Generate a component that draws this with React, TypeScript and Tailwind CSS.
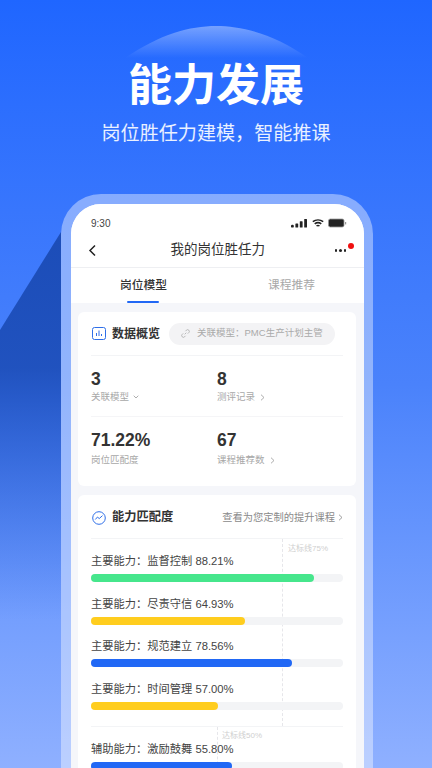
const bars = [
  { label: "主要能力：监督控制 88.21%", width: "88.5%", color: "bg-[#46e68c]" },
  { label: "主要能力：尽责守信 64.93%", width: "61.1%", color: "bg-[#ffcd1e]" },
  { label: "主要能力：规范建立 78.56%", width: "79.8%", color: "bg-[#2168f5]" },
  { label: "主要能力：时间管理 57.00%", width: "50.3%", color: "bg-[#ffcd1e]" },
];

const Stat = ({ value, label, arrow, low }: { value: string; label: string; arrow: "down" | "right" | ""; low?: boolean }) => (
  <div className="flex flex-col">
    <div className="text-[17.5px] leading-[20px] font-bold text-[#333]">{value}</div>
    <div className={low ? "mt-[3px] flex items-center text-[9.5px] leading-[14px] text-[#a8a8a8]" : "mt-[1px] flex items-center text-[9.5px] leading-[14px] text-[#a8a8a8]"}>
      {label}
      {arrow === "right" && (
        <svg width="5" height="7" viewBox="0 0 5 7" className="ml-[5px]" fill="none" stroke="#999" strokeWidth="0.8">
          <path d="M1 .7 4 3.5 1 6.3" />
        </svg>
      )}
      {arrow === "down" && (
        <svg width="6" height="4" viewBox="0 0 6 4" className="ml-[4px]" fill="none" stroke="#999" strokeWidth="0.8">
          <path d="M.7 .7 3 3 5.3 .7" />
        </svg>
      )}
    </div>
  </div>
);

const Bar = ({ label, width, color }: { label: string; width: string; color: string }) => (
  <div className="h-[42.6px]">
    <div className="text-[11.25px] leading-[16px] text-[#444]">{label}</div>
    <div className="mt-[5px] h-[8px] rounded-full bg-[#f3f4f6]">
      <div className={`h-full rounded-full ${color}`} style={{ width }} />
    </div>
  </div>
);

export default function App() {
  return (
    <div className="relative h-[768px] w-[432px] overflow-hidden bg-gradient-to-b from-[#1f66ff] via-[#4a82fb] to-[#8fb0ff] font-['Liberation_Sans','Noto_Sans_CJK_SC',sans-serif]">
      {/* background shapes */}
      <svg className="absolute left-0 top-0" width="432" height="768" viewBox="0 0 432 768">
        <defs>
          <linearGradient id="dome" x1="0" y1="0" x2="0" y2="1">
            <stop offset="0" stopColor="#fff" stopOpacity="0.38" />
            <stop offset="1" stopColor="#fff" stopOpacity="0" />
          </linearGradient>
          <linearGradient id="slope" x1="0" y1="0" x2="0" y2="1">
            <stop offset="0" stopColor="#1c4db8" stopOpacity="1" />
            <stop offset="0.35" stopColor="#1c4db8" stopOpacity="0.9" />
            <stop offset="1" stopColor="#2a62e0" stopOpacity="0" />
          </linearGradient>
        </defs>
        <path d="M125 58C160 34 190 26 216 26c26 0 58 8 92 32Z" fill="url(#dome)" />
        <path d="M61 232 0 330V620H61Z" fill="url(#slope)" />
      </svg>

      <div className="relative flex flex-col items-center">
        <h1 className="mt-[57px] text-[44px] leading-[58px] font-bold text-white">能力发展</h1>
        <p className="mt-[5px] text-[19.1px] leading-[28px] text-white/90">岗位胜任力建模，智能推课</p>

        {/* phone */}
        <div className="mt-[46px] ml-[2px] h-[640px] w-[312px] rounded-t-[40px] bg-white/40 pl-[10px] pr-[9px] pt-[10px]">
          <div className="h-full overflow-hidden rounded-t-[30px] bg-[#f5f6fa]">
            <div className="bg-white">
              <div className="flex h-[34px] items-center justify-between pl-[20px] pr-[17px] pt-[4px]">
                <span className="text-[10px] text-[#444]">9:30</span>
                <svg width="56" height="10" viewBox="0 0 56 10" fill="#222">
                  <rect x="0" y="6.8" width="2.8" height="2.8" rx="1.2" />
                  <rect x="4.4" y="5.4" width="2.8" height="4.2" rx=".6" />
                  <rect x="8.8" y="3.2" width="2.8" height="6.4" rx=".6" />
                  <rect x="13.2" y="1" width="2.8" height="8.6" rx=".6" />
                  <path d="M21.8 3.7a8.4 8.4 0 0 1 10.4 0M23.7 5.9a5.4 5.4 0 0 1 6.6 0M25.5 8a2.4 2.4 0 0 1 3 0" fill="none" stroke="#222" strokeWidth="1.5" />
                  <rect x="37.5" y="1" width="15.5" height="8" rx="1.8" fill="#222" stroke="#999" strokeWidth="0.8" />
                  <rect x="54" y="4" width="1.2" height="2.4" fill="#999" />
                </svg>
              </div>
              <div className="flex h-[29px] items-center justify-between pb-[4px] pl-[17px] pr-[18px]">
                <svg width="9" height="13" viewBox="0 0 9 13" fill="none" stroke="#222" strokeWidth="1.5">
                  <path d="M7 1.5 2 6.5l5 5" />
                </svg>
                <span className="ml-[4px] text-[13.5px] text-[#333]">我的岗位胜任力</span>
                <span className="relative flex gap-[2px]">
                  <i className="h-[2.5px] w-[2.5px] rounded-full bg-[#222]" />
                  <i className="h-[2.5px] w-[2.5px] rounded-full bg-[#222]" />
                  <i className="h-[2.5px] w-[2.5px] rounded-full bg-[#222]" />
                  <i className="absolute -right-[8px] -top-[6px] h-[6px] w-[6px] rounded-full bg-[#f01010]" />
                </span>
              </div>
              <div className="h-[1px] bg-[#eeeff2]" />
              <div className="flex h-[35px]">
                <div className="relative flex w-[145px] items-center justify-center pb-[2px] text-[11.75px] font-medium text-[#333]">
                  岗位模型
                  <span className="absolute bottom-0 left-[56px] h-[2.5px] w-[32px] rounded-full bg-[#2168f5]" />
                </div>
                <div className="flex flex-1 items-center justify-center pb-[2px] pl-[3px] text-[11.75px] text-[#a8a8a8]">课程推荐</div>
              </div>
            </div>

            <div className="flex flex-col gap-[9px] pl-[7px] pr-[8px] pt-[9px]">
              {/* 数据概览 */}
              <div className="rounded-[6px] bg-white px-[13px]">
                <div className="flex h-[44px] items-center border-b border-[#f3f4f6]">
                  <svg width="14" height="13" viewBox="0 0 14 13" className="ml-[1px]" fill="none" stroke="#2f6fe8" strokeWidth="1">
                    <rect x=".5" y=".5" width="13" height="12" rx="2" />
                    <path d="M4.5 9V6M7 9V3.5M9.5 9V7" />
                  </svg>
                  <span className="ml-[6px] text-[12px] font-bold text-[#333]">数据概览</span>
                  <span className="ml-[9px] flex h-[22px] w-[166px] items-center rounded-full bg-[#f3f3f5] pl-[12px] text-[9.5px] text-[#aaa]">
                    <svg width="9" height="9" viewBox="0 0 9 9" fill="none" stroke="#aaa" strokeWidth="0.8">
                      <path d="M3.7 5.3 5.3 3.7M4.4 2.2l1-1a1.6 1.6 0 0 1 2.4 2.4l-1 1M4.6 6.8l-1 1a1.6 1.6 0 0 1-2.4-2.4l1-1" />
                    </svg>
                    <span className="ml-[7px]">关联模型：PMC生产计划主管</span>
                  </span>
                </div>
                <div className="grid grid-cols-[126px_1fr] border-b border-[#f5f5f7] pb-[12px] pt-[13px]">
                  <Stat value="3" label="关联模型" arrow="down" />
                  <Stat value="8" label="测评记录" arrow="right" />
                </div>
                <div className="grid grid-cols-[126px_1fr] pb-[19px] pt-[13px]">
                  <Stat value="71.22%" label="岗位匹配度" arrow="" low />
                  <Stat value="67" label="课程推荐数" arrow="right" low />
                </div>
              </div>

              {/* 能力匹配度 */}
              <div className="rounded-t-[6px] bg-white px-[13px]">
                <div className="flex h-[44px] items-center justify-between border-b border-[#f3f4f6] pt-[2px]">
                  <div className="flex items-center">
                    <svg width="14" height="14" viewBox="0 0 14 14" className="ml-[1px]" fill="none" stroke="#2f6fe8" strokeWidth="1">
                      <circle cx="7" cy="7" r="6.3" />
                      <path d="M3.3 8.5 5.5 6l1.7 1.6 3.3-3" />
                    </svg>
                    <span className="ml-[6px] text-[12.25px] font-bold text-[#333]">能力匹配度</span>
                  </div>
                  <span className="flex items-center text-[10.25px] text-[#8a8a8a]">
                    查看为您定制的提升课程
                    <svg width="5" height="7" viewBox="0 0 5 7" className="ml-[3px]" fill="none" stroke="#888" strokeWidth="0.8">
                      <path d="M1 .7 4 3.5 1 6.3" />
                    </svg>
                  </span>
                </div>
                <div className="relative h-[188px] border-b border-[#f3f4f6] pt-[14px]">
                  <span className="absolute left-[197px] top-[3px] text-[8px] leading-[14px] text-[#cfcfcf]">达标线75%</span>
                  <span className="absolute bottom-0 left-[191px] top-0 border-l border-dashed border-[#e6e6ea]" />
                  <div className="relative">
                    {bars.map((b) => (
                      <Bar key={b.label} {...b} />
                    ))}
                  </div>
                </div>
                <div className="relative pt-[14px]">
                  <span className="absolute left-[131px] top-[2px] text-[8px] leading-[14px] text-[#cfcfcf]">达标线50%</span>
                  <span className="absolute bottom-0 left-[126px] top-0 border-l border-dashed border-[#e6e6ea]" />
                  <div className="relative">
                    <Bar label="辅助能力：激励鼓舞 55.80%" width="56%" color="bg-[#2168f5]" />
                  </div>
                </div>
              </div>
            </div>
          </div>
        </div>
      </div>
    </div>
  );
}
